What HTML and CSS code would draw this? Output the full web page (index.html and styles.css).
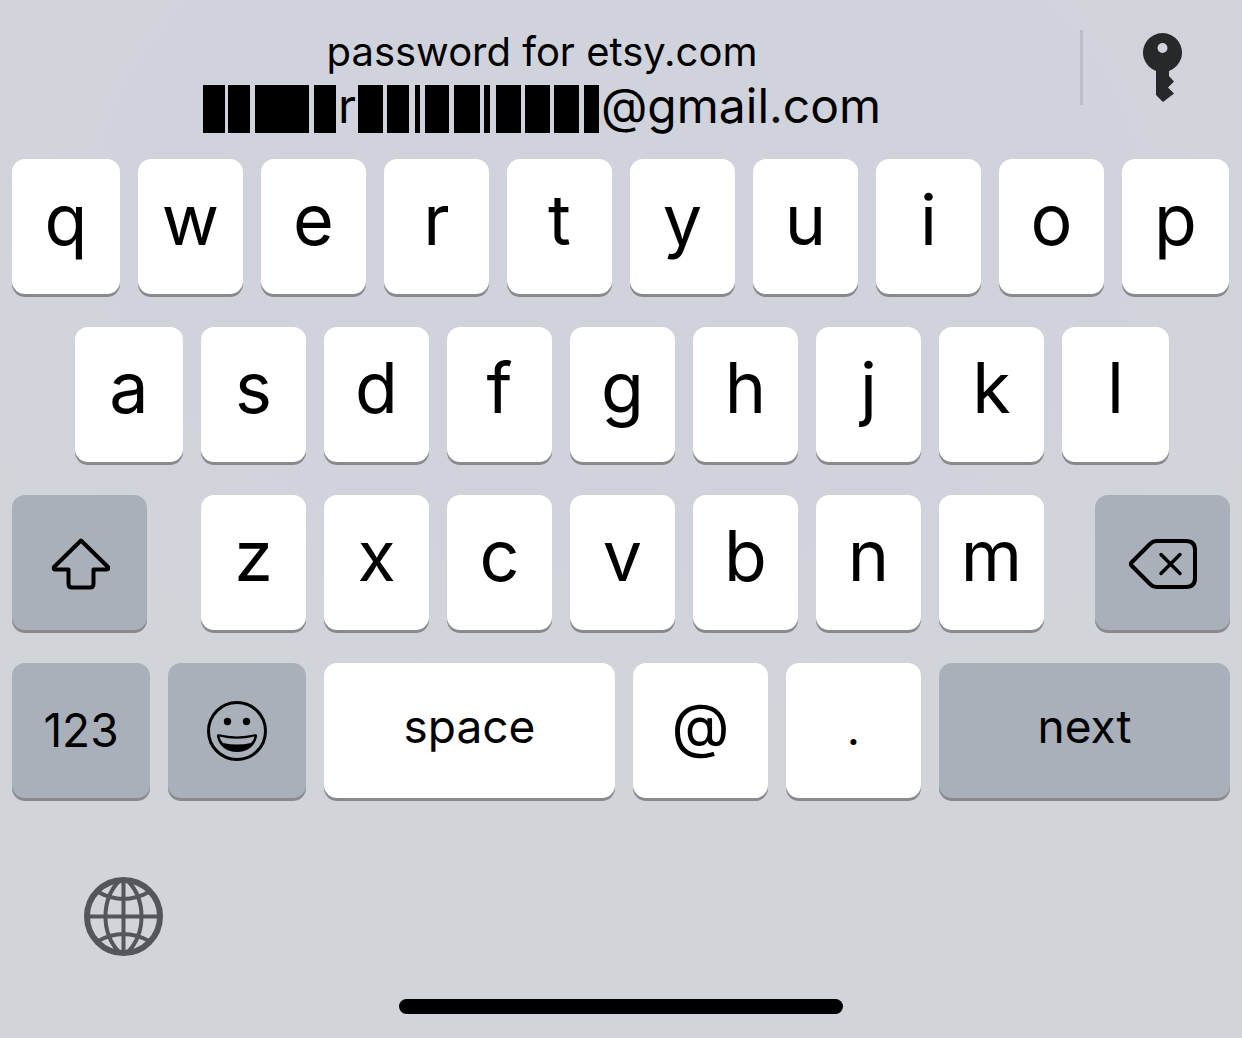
FILE: index.html
```html
<!DOCTYPE html>
<html lang="en">
<head>
<meta charset="utf-8">
<meta name="viewport" content="width=device-width, initial-scale=1">
<title>Keyboard</title>
<link rel="stylesheet" href="styles.css">
</head>
<body>
<main class="keyboard">
  <div class="suggestions">
    <button class="credential" type="button">
      <span class="credential-title">password for etsy.com</span>
      <span class="credential-account">
        <svg class="redaction" width="133" height="48" viewBox="0 0 133 48" aria-hidden="true"><path d="M0 0h22v48H0zM25 0h22v48H25zM52 0h54v48H52zM111 0h22v48H111z"/></svg>
        <span>r</span>
        <svg class="redaction" width="241" height="48" viewBox="0 0 241 48" aria-hidden="true"><path d="M0 0h25v48H0zM29 0h22v48H29zM57 0h5v48H57zM67 0h24v48H67zM96 0h26v48H96zM126 0h6v48H126zM138 0h25v48H138zM167 0h25v48H167zM196 0h25v48H196zM226 0h15v48H226z"/></svg>
        <span>@gmail.com</span>
      </span>
    </button>
    <button class="passwords" type="button" aria-label="Passwords">
      <svg width="40" height="70" viewBox="0 0 40 70" aria-hidden="true"><path fill="#272829" fill-rule="evenodd" d="M13 38A19.500 19.500 0 1 1 26 38V43L31 48.500 25 54.500 31 60.500 20 69 13 62ZM19.500 10A5 5 0 1 0 19.500 20A5 5 0 1 0 19.500 10Z"/></svg>
    </button>
  </div>

  <div class="rows">
    <div class="row row-top">
      <button class="key">q</button><button class="key">w</button><button class="key">e</button><button class="key">r</button><button class="key">t</button><button class="key">y</button><button class="key">u</button><button class="key">i</button><button class="key">o</button><button class="key">p</button>
    </div>
    <div class="row row-home">
      <button class="key">a</button><button class="key">s</button><button class="key">d</button><button class="key">f</button><button class="key">g</button><button class="key">h</button><button class="key">j</button><button class="key">k</button><button class="key">l</button>
    </div>
    <div class="row row-bottom">
      <button class="key key-dark" aria-label="Shift">
        <svg width="60" height="52" viewBox="0 0 60 52" fill="none" stroke="#000" stroke-width="4" stroke-linejoin="round" aria-hidden="true"><path d="M31 2.500L4 29Q3 31.500 5.500 31.500H18.500V46Q18.500 49.500 22 49.500H40Q43.500 49.500 43.500 46V31.500H56.500Q59.500 31.500 58 29Z"/></svg>
      </button>
      <div class="row letters">
        <button class="key">z</button><button class="key">x</button><button class="key">c</button><button class="key">v</button><button class="key">b</button><button class="key">n</button><button class="key">m</button>
      </div>
      <button class="key key-dark" aria-label="Delete">
        <svg width="68" height="50" viewBox="0 0 68 50" fill="none" stroke="#000" stroke-width="4" stroke-linecap="round" stroke-linejoin="round" aria-hidden="true"><path d="M2.500 23.500L21.500 4.500Q24 2 27.500 2H57Q66 2 66 11V39Q66 48 57 48H27.500Q24 48 21.500 45.500L2.500 26.500Q1 25 2.500 23.500Z"/><path stroke-width="3.500" d="M32 15.500L51 34.500M51 15.500L32 34.500"/></svg>
      </button>
    </div>
    <div class="row row-actions">
      <button class="key key-dark key-word key-digits">123</button>
      <button class="key key-dark key-emoji" aria-label="Emoji">
        <svg width="60" height="60" viewBox="0 0 60 60" aria-hidden="true"><circle cx="30" cy="30" r="28.500" fill="none" stroke="#000" stroke-width="3"/><circle cx="20.500" cy="20.500" r="3.700"/><circle cx="39.500" cy="20.500" r="3.700"/><path d="M12 33.300Q30 37.500 48 33.300Q50.500 33 50 35.500C48 45.500 40 51 30 51S12 45.500 10 35.500Q9.500 33 12 33.300Z"/><path fill="#aab0ba" d="M12.500 35.500Q30 40 47.500 35.500Q47 39 44 42Q30 45 16 42Q13 39 12.500 35.500Z"/></svg>
      </button>
      <button class="key key-word">space</button>
      <button class="key key-at">@</button>
      <button class="key key-word key-dot">.</button>
      <button class="key key-dark key-word">next</button>
    </div>
  </div>

  <div class="footer">
    <button class="globe" type="button" aria-label="Next keyboard">
      <svg width="80" height="80" viewBox="0 0 80 80" fill="none" stroke="#53565b" stroke-width="4" aria-hidden="true"><circle cx="39.500" cy="39.500" r="36.500" stroke-width="6"/><path d="M39.500 3V76M3 39.500H76M14 15Q39.500 29 65 15M14 64Q39.500 50 65 64M35 4C17 23 17 56 35 75M44 4C62 23 62 56 44 75"/></svg>
    </button>
    <div class="home-indicator"></div>
  </div>
</main>
</body>
</html>
```
FILE: styles.css
```css
* {
  box-sizing: border-box;
}

body {
  margin: 0;
  background: #d1d4d9;
  color: #000;
  font-family: Inter, "Liberation Sans", sans-serif;
}

button {
  margin: 0;
  padding: 0;
  border: 0;
  background: none;
  color: inherit;
  font: inherit;
}

svg {
  display: block;
}

.keyboard {
  display: flex;
  flex-direction: column;
  min-height: 100vh;
  background: radial-gradient(ellipse 60% 50% at 50% 20%, #d0d3dc 60%, #d1d4d9 100%);
}

.suggestions {
  display: flex;
  height: 159px;
}

.credential {
  flex: 1;
  display: flex;
  flex-direction: column;
  align-items: center;
  padding: 26px 0 0 4px;
}

.credential-title {
  font-size: 40px;
  line-height: 52px;
}

.credential-account {
  display: flex;
  align-items: flex-end;
  gap: 2px;
  font-size: 48px;
  line-height: 56px;
}

.redaction {
  margin-bottom: 1px;
}

.passwords {
  display: flex;
  justify-content: center;
  width: 162px;
  height: 75px;
  margin-top: 30px;
  padding-top: 3px;
  border-left: 3px solid #bbbec6;
}

.rows {
  display: grid;
  gap: 33px;
}

.row {
  display: grid;
  gap: 18px;
}

.row-top {
  grid-template-columns: 108fr repeat(8, 105fr) 107fr;
  padding: 0 13px 0 12px;
}

.row-home {
  grid-template-columns: 108fr repeat(7, 105fr) 107fr;
  padding: 0 73px 0 75px;
}

.row-bottom {
  grid-template-columns: 135fr 846fr 135fr;
  gap: 51px;
  padding: 0 12px;
}

.letters {
  grid-template-columns: repeat(7, 1fr);
  padding-left: 3px;
}

.row-actions {
  grid-template-columns: 138fr 138fr 291fr 135fr 135fr 291fr;
  padding: 0 12px;
}

.key {
  display: flex;
  align-items: center;
  justify-content: center;
  min-width: 0;
  height: 135px;
  padding-bottom: 14px;
  border-radius: 13px;
  background: #fff;
  box-shadow: 0 3px 0 #898a8e;
  font-size: 70px;
  font-weight: 400;
  line-height: 88px;
}

.key-dark {
  padding: 2px 0 0;
  background: #aab0ba;
}

.key-word {
  padding: 0 0 10px;
  font-size: 46px;
}

.key-digits {
  padding: 0 0 2px;
}

.key-emoji {
  padding: 0;
}

.key-at {
  padding-bottom: 12px;
  font-size: 60px;
}

.key-dot {
  padding: 0 0 6px;
}

.footer {
  flex: 1;
  display: flex;
  flex-direction: column;
  justify-content: space-between;
  padding: 79px 0 24px;
}

.globe {
  align-self: flex-start;
  margin-left: 84px;
}

.home-indicator {
  align-self: center;
  width: 444px;
  height: 15px;
  border-radius: 8px;
  background: #000;
}
```
